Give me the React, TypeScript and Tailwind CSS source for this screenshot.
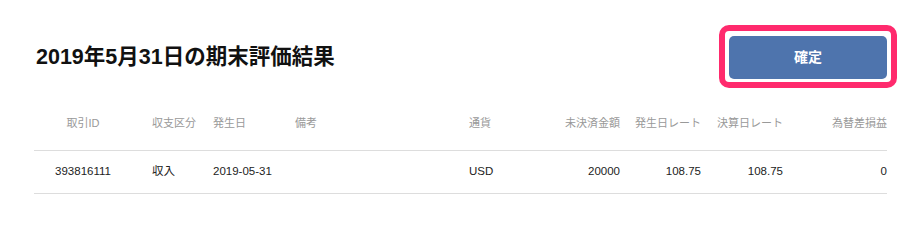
const font = { fontFamily: '"Liberation Sans", "Noto Sans CJK JP", sans-serif' };

type Col = { label: string; align: 'left' | 'right' | 'center'; pad?: string };

const columns: Col[] = [
  { label: '取引ID', align: 'center' },
  { label: '収支区分', align: 'left', pad: 'pl-[20px]' },
  { label: '発生日', align: 'left' },
  { label: '備考', align: 'left' },
  { label: '通貨', align: 'left' },
  { label: '未決済金額', align: 'right' },
  { label: '発生日レート', align: 'right' },
  { label: '決算日レート', align: 'right' },
  { label: '為替差損益', align: 'right' },
];

const rows = [['393816111', '収入', '2019-05-31', '', 'USD', '20000', '108.75', '108.75', '0']];

const alignClass = {
  left: 'justify-start',
  right: 'justify-end',
  center: 'justify-center',
};

const gridCols = 'grid grid-cols-[98px_81px_82px_174px_71px_80px_81px_82px_104px]';

export default function App() {
  return (
    <div className="w-[921px] h-[227px] bg-white px-[34px] pt-[36px]" style={font}>
      {/* Header */}
      <div className="flex items-center justify-between h-[43px]">
        <h1 className="text-[21.5px] font-bold text-[#111] pl-[2px]">2019年5月31日の期末評価結果</h1>
        {/* highlight ring round the button */}
        <div className="-mx-[10px] -mt-[11px] -mb-[9px] rounded-[10px] border-[6px] border-[#ff2a6d] px-[4px] pt-[5px] pb-[3px]">
          <button className="block w-[158px] h-[43px] rounded-[5px] bg-[#4e74ad] text-white text-[14px] font-bold">
            確定
          </button>
        </div>
      </div>

      {/* Table */}
      <div className="mt-[17px]">
        <div className={`${gridCols} h-[55px] border-b border-[#dddddd]`}>
          {columns.map((c) => (
            <div key={c.label} className={`flex items-center ${alignClass[c.align]} ${c.pad ?? ''} text-[11px] text-[#999]`}>
              {c.label}
            </div>
          ))}
        </div>
        {rows.map((r, i) => (
          <div key={i} className={`${gridCols} h-[43px] border-b border-[#dddddd]`}>
            {r.map((v, j) => (
              <div
                key={j}
                className={`flex items-center ${alignClass[columns[j].align]} ${columns[j].pad ?? ''} text-[11.5px] text-[#222]`}
              >
                {v}
              </div>
            ))}
          </div>
        ))}
      </div>
    </div>
  );
}
